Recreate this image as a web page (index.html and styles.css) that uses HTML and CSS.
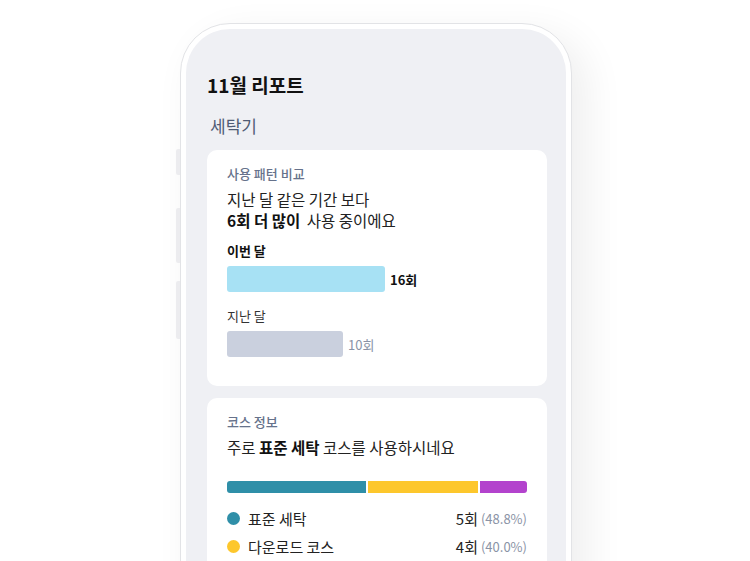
FILE: index.html
```html
<!DOCTYPE html>
<html>
<head>
    <title>11월 리포트</title>
    <link rel="stylesheet" href="styles.css">
</head>
<body>
    <div class="phone">
        <span class="side-btn btn-mute"></span>
        <span class="side-btn btn-up"></span>
        <span class="side-btn btn-down"></span>

        <div class="screen">
            <h1>11월 리포트</h1>
            <h2>세탁기</h2>

            <div class="card">
                <div class="card-label">사용 패턴 비교</div>
                <p class="headline">
                    지난 달 같은 기간 보다<br>
                    <strong class="gap-after">6회 더 많이</strong> 사용 중이에요
                </p>

                <div class="bar-title bar-title-current">이번 달</div>
                <div class="bar-row">
                    <div class="bar bar-current" style="width: 158px"></div>
                    <span class="bar-value bar-value-current">16회</span>
                </div>

                <div class="bar-title">지난 달</div>
                <div class="bar-row">
                    <div class="bar bar-last" style="width: 116px"></div>
                    <span class="bar-value">10회</span>
                </div>
            </div>

            <div class="card">
                <div class="card-label">코스 정보</div>
                <p class="headline">주로 <strong>표준 세탁</strong> 코스를 사용하시네요</p>

                <div class="stack-bar">
                    <div class="seg seg-standard" style="flex-grow: 139"></div>
                    <div class="seg seg-download" style="flex-grow: 111"></div>
                    <div class="seg seg-etc" style="flex-grow: 47"></div>
                </div>

                <ul class="legend">
                    <li class="legend-item">
                        <span class="dot seg-standard"></span>
                        <span class="legend-name">표준 세탁</span>
                        <span class="legend-count">5회</span>
                        <span class="legend-pct">(48.8%)</span>
                    </li>
                    <li class="legend-item">
                        <span class="dot seg-download"></span>
                        <span class="legend-name">다운로드 코스</span>
                        <span class="legend-count">4회</span>
                        <span class="legend-pct">(40.0%)</span>
                    </li>
                    <li class="legend-item">
                        <span class="dot seg-etc"></span>
                        <span class="legend-name">기타</span>
                        <span class="legend-count">1회</span>
                        <span class="legend-pct">(11.2%)</span>
                    </li>
                </ul>
            </div>
        </div>
    </div>
</body>
</html>
```

FILE: styles.css
```css
html, body {
    height: 100%;
}
body {
    margin: 0;
    background: #fff;
    font-family: "Noto Sans CJK KR", "Noto Sans", sans-serif;
    color: #222;
    overflow: hidden;
    display: flex;
    justify-content: center;
    padding-top: 23px;
    box-sizing: border-box;
}
.phone {
    position: relative;
    width: 392px;
    height: 820px;
    flex-shrink: 0;
    margin-left: 2px;
    box-sizing: border-box;
    padding: 5px;
    background: #fff;
    border: 1px solid #e2e3e6;
    border-radius: 50px;
    box-shadow: 14px 12px 40px rgba(0,0,0,0.07);
}
.side-btn {
    position: absolute;
    left: -5px;
    width: 4px;
    background: #ececef;
    border-radius: 2px 0 0 2px;
}
.btn-mute { top: 125px; height: 26px; }
.btn-up { top: 184px; height: 55px; }
.btn-down { top: 257px; height: 58px; }

.screen {
    height: 100%;
    background: #eff0f4;
    border-radius: 44px;
    padding: 42px 19px 0 21px;
    box-sizing: border-box;
}
h1 {
    margin: 0;
    font-size: 19px;
    line-height: 28px;
    font-weight: 700;
    color: #111;
}
h2 {
    margin: 15px 0 12px 3px;
    font-size: 17px;
    line-height: 24px;
    font-weight: 400;
    color: #4f5c75;
}
.card {
    background: #fff;
    border-radius: 10px;
    padding: 15px 20px 29px;
    margin-bottom: 12px;
}
.card-label {
    font-size: 13px;
    line-height: 18px;
    font-weight: 500;
    color: #66728b;
}
.headline {
    margin: 6px 0 0;
    font-size: 15.5px;
    line-height: 21px;
    color: #222;
}
.headline strong {
    font-weight: 700;
    color: #111;
}
.headline .gap-after {
    margin-right: 3px;
}
.bar-title {
    margin-top: 11px;
    font-size: 13px;
    line-height: 18px;
    color: #333;
}
.bar-title-current {
    font-weight: 700;
    color: #111;
}
.bar-row + .bar-title {
    margin-top: 15px;
}
.bar-row {
    display: flex;
    align-items: center;
    gap: 5px;
    margin-top: 6px;
}
.bar {
    height: 26px;
    border-radius: 3px;
}
.bar-current { background: #a7e1f4; }
.bar-last { background: #cad0de; }
.bar-value {
    font-size: 13px;
    color: #8a93a6;
}
.bar-value-current {
    font-weight: 700;
    color: #111;
}

.stack-bar {
    display: flex;
    gap: 2px;
    height: 12px;
    margin-top: 23px;
    border-radius: 3px;
    overflow: hidden;
}
.seg-standard { background: #2f8fa8; }
.seg-download { background: #fdc72c; }
.seg-etc { background: #b343cd; }
.legend {
    list-style: none;
    margin: 11px 0 0;
    padding: 0;
}
.legend-item {
    display: flex;
    align-items: center;
    height: 28px;
    font-size: 15px;
    color: #222;
}
.dot {
    width: 13px;
    height: 13px;
    border-radius: 50%;
    margin-right: 8px;
}
.legend-name {
    flex: 1;
}
.legend-pct {
    margin-left: 3px;
    font-size: 13px;
    color: #8a93a6;
}
```
